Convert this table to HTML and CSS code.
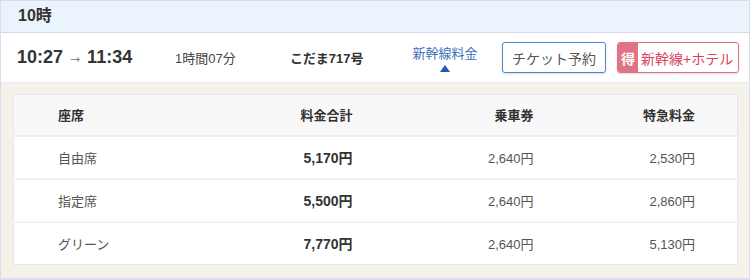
FILE: index.html
```html
<!DOCTYPE html>
<html lang="ja">
<head>
  <meta charset="UTF-8">
  <title>10時 こだま717号</title>
  <link rel="stylesheet" href="styles.css">
</head>
<body>
  <div class="timetable">
    <div class="hour-head">10時</div>

    <!-- 列車の行 -->
    <div class="train-row">
      <div class="times">
        <span class="time">10:27</span>
        <span class="arrow">→</span>
        <span class="time">11:34</span>
      </div>
      <div class="duration">1時間07分</div>
      <div class="train-name">こだま717号</div>
      <div class="fare-toggle">
        <span>新幹線料金</span>
        <span class="tri"></span>
      </div>
      <a class="btn-ticket" href="#">チケット予約</a>
      <a class="btn-hotel" href="#"><span class="toku">得</span><span class="hotel-label">新幹線+ホテル</span></a>
    </div>

    <!-- 料金表 -->
    <div class="fare-area">
      <table class="fare-table">
        <thead>
          <tr>
            <th class="seat">座席</th>
            <th class="num total">料金合計</th>
            <th class="num">乗車券</th>
            <th class="num last">特急料金</th>
          </tr>
        </thead>
        <tbody>
          <tr>
            <td class="seat">自由席</td>
            <td class="num total">5,170円</td>
            <td class="num">2,640円</td>
            <td class="num last">2,530円</td>
          </tr>
          <tr>
            <td class="seat">指定席</td>
            <td class="num total">5,500円</td>
            <td class="num">2,640円</td>
            <td class="num last">2,860円</td>
          </tr>
          <tr>
            <td class="seat">グリーン</td>
            <td class="num total">7,770円</td>
            <td class="num">2,640円</td>
            <td class="num last">5,130円</td>
          </tr>
        </tbody>
      </table>
    </div>
  </div>
</body>
</html>
```

FILE: styles.css
```css
* {
  margin: 0;
  padding: 0;
  box-sizing: border-box;
}

body {
  font-family: 'Liberation Sans', 'Noto Sans CJK JP', sans-serif;
  color: #333;
  background: #fff;
}

.timetable {
  width: 750px;
  height: 280px;
  border: 1px solid #dcdcef;
  border-bottom-width: 2px;
}

.hour-head {
  height: 32px;
  padding-left: 17px;
  background: #ebf3fd;
  border-bottom: 1px solid #d6d6ee;
  font-size: 16px;
  font-weight: 700;
  line-height: 30px;
  color: #333;
}

.train-row {
  height: 50px;
  display: flex;
  align-items: center;
  border-bottom: 1px solid #e8e8f0;
  padding-left: 16px;
}

.times {
  width: 158px;
  display: flex;
  align-items: center;
  gap: 7px;
}

.time {
  font-size: 18px;
  font-weight: 700;
  color: #333;
}

.arrow {
  font-family: 'DejaVu Sans', sans-serif;
  font-size: 12px;
  color: #888;
  margin-top: 2px;
}

.duration {
  width: 115px;
  font-size: 13px;
  color: #444;
}

.train-name {
  width: 122px;
  font-size: 13px;
  font-weight: 700;
  color: #333;
}

.fare-toggle {
  width: 66px;
  margin-right: 24px;
  display: flex;
  flex-direction: column;
  align-items: center;
  gap: 3px;
  font-size: 13px;
  color: #3b6fb6;
}

.tri {
  width: 0;
  height: 0;
  border-left: 5px solid transparent;
  border-right: 5px solid transparent;
  border-bottom: 7px solid #1e5bb5;
}

.btn-ticket,
.btn-hotel {
  height: 31px;
  display: flex;
  align-items: center;
  text-decoration: none;
  border-radius: 3px;
  font-size: 14px;
  box-shadow: 0 1px 2px rgba(0, 0, 0, 0.15);
}

.btn-ticket {
  width: 104px;
  justify-content: center;
  border: 1.5px solid #4b88d2;
  color: #555;
}

.btn-hotel {
  width: 122px;
  margin-left: 11px;
  border: 1.5px solid #e07485;
  overflow: hidden;
  color: #d8425c;
}

.toku {
  width: 20px;
  height: 100%;
  background: #e07485;
  color: #fff;
  font-weight: 700;
  display: flex;
  align-items: center;
  justify-content: center;
}

.hotel-label {
  padding-left: 3px;
}

.fare-area {
  background: #f5f2ea;
  padding: 11px 11px 12px 12px;
  height: 195px;
}

.fare-table {
  width: 100%;
  border-collapse: collapse;
  background: #fff;
  border: 1px solid #e6e6e6;
  font-size: 13px;
}

.fare-table th {
  height: 41px;
  background: #f8f8f8;
  font-weight: 700;
  color: #333;
  border-bottom: 2px solid #eee;
}

.fare-table td {
  height: 43px;
  color: #555;
  border-bottom: 2px solid #f2f2f2;
}

.fare-table tr:last-child td {
  border-bottom: none;
}

.seat {
  text-align: left;
  padding-left: 44px;
  width: 200px;
}

.num {
  text-align: right;
}

.num.total {
  width: 139px;
}

.fare-table td.total {
  font-size: 14px;
  font-weight: 700;
  color: #333;
}

.fare-table .num:nth-child(3) {
  width: 181px;
}

.num.last {
  padding-right: 42px;
}
```
